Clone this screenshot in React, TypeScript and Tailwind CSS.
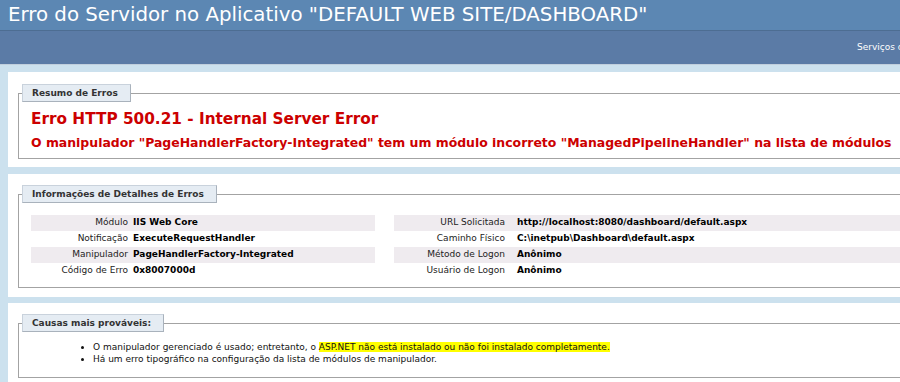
import React from "react";

const body = { fontFamily: '"DejaVu Sans", Verdana, sans-serif' };

function Legend({ children }: { children: React.ReactNode }) {
  return (
    <legend className="-ml-[9px] h-[18px] pl-[9px] pr-[12px] bg-[#e5ecf3] border border-[#c9d2dc] border-r-[#a9b2bc] border-b-[#a9b2bc] text-[#333] font-bold text-[9px] leading-[16px] whitespace-nowrap">
      {children}
    </legend>
  );
}

function Row({ label, value, alt, lw, gap }: { label: string; value: string; alt?: boolean; lw: string; gap: string }) {
  return (
    <div className={`flex h-[16px] items-center ${alt ? "bg-[#efebef]" : ""}`}>
      <div className={`${lw} shrink-0 text-right text-[#222]`}>{label}</div>
      <div className={`${gap} font-bold text-black whitespace-nowrap`}>{value}</div>
    </div>
  );
}

export default function App() {
  return (
    <div className="w-[900px] h-[382px] overflow-hidden bg-[#cce1ee]" style={body}>
      <div className="h-[30px] bg-[#5c87b3] pl-[8px] text-white text-[19.8px] leading-[30px] whitespace-nowrap">
        Erro do Servidor no Aplicativo "DEFAULT WEB SITE/DASHBOARD"
      </div>
      <div className="h-[35px] bg-[#5b7ba6] border-t border-[#4d6d92] border-b border-b-[#c1cfdd] pl-[857px] text-white text-[9px] leading-[33px] whitespace-nowrap">
        Serviços de Informações da Internet 10.0
      </div>

      <div className="pl-[8px]">
        {/* Panel 1 */}
        <div className="mt-[7px] w-[1000px] bg-white pt-[12px] pb-[8px] pl-[10px]">
          <fieldset className="border-l border-t border-b border-[#a3a3a3] pl-[12px] pb-[6px]">
            <Legend>Resumo de Erros</Legend>
            <h2 className="mt-[7px] text-[#cc0000] font-bold text-[15.3px] leading-[20px] whitespace-nowrap">
              Erro HTTP 500.21 - Internal Server Error
            </h2>
            <h3 className="mt-[5px] text-[#cc0000] font-bold text-[12.45px] leading-[18px] whitespace-nowrap">
              O manipulador "PageHandlerFactory-Integrated" tem um módulo incorreto "ManagedPipelineHandler" na lista de módulos
            </h3>
          </fieldset>
        </div>

        {/* Panel 2 */}
        <div className="mt-[7px] w-[1000px] bg-white pt-[11px] pb-[9px] pl-[10px]">
          <fieldset className="border-l border-t border-b border-[#a3a3a3] pl-[12px] pb-[8px]">
            <Legend>Informações de Detalhes de Erros</Legend>
            <div className="mt-[12px] flex text-[9px]">
              <div className="w-[344px] shrink-0">
                <Row alt label="Módulo" value="IIS Web Core" lw="w-[97px]" gap="pl-[5px]" />
                <Row label="Notificação" value="ExecuteRequestHandler" lw="w-[97px]" gap="pl-[5px]" />
                <Row alt label="Manipulador" value="PageHandlerFactory-Integrated" lw="w-[97px]" gap="pl-[5px]" />
                <Row label="Código de Erro" value="0x8007000d" lw="w-[97px]" gap="pl-[5px]" />
              </div>
              <div className="ml-[19px] flex-1">
                <Row alt label="URL Solicitada" value="http://localhost:8080/dashboard/default.aspx" lw="w-[111px]" gap="pl-[12px]" />
                <Row label="Caminho Físico" value="C:\inetpub\Dashboard\default.aspx" lw="w-[111px]" gap="pl-[12px]" />
                <Row alt label="Método de Logon" value="Anônimo" lw="w-[111px]" gap="pl-[12px]" />
                <Row label="Usuário de Logon" value="Anônimo" lw="w-[111px]" gap="pl-[12px]" />
              </div>
            </div>
          </fieldset>
        </div>

        {/* Panel 3 */}
        <div className="mt-[6px] w-[1000px] bg-white pt-[11px] pb-[9px] pl-[10px]">
          <fieldset className="border-l border-t border-b border-[#a3a3a3] pl-[12px] pb-[12px]">
            <Legend>Causas mais prováveis:</Legend>
            <ul className="mt-[9px] list-disc pl-[62px] text-[9px] leading-[12px] text-[#111]">
              <li className="whitespace-nowrap">
                O manipulador gerenciado é usado; entretanto, o{" "}
                <span className="bg-[#ffff00]">ASP.NET não está instalado ou não foi instalado completamente.</span>
              </li>
              <li className="whitespace-nowrap">
                Há um erro tipográfico na configuração da lista de módulos de manipulador.
              </li>
            </ul>
          </fieldset>
        </div>
      </div>
    </div>
  );
}
